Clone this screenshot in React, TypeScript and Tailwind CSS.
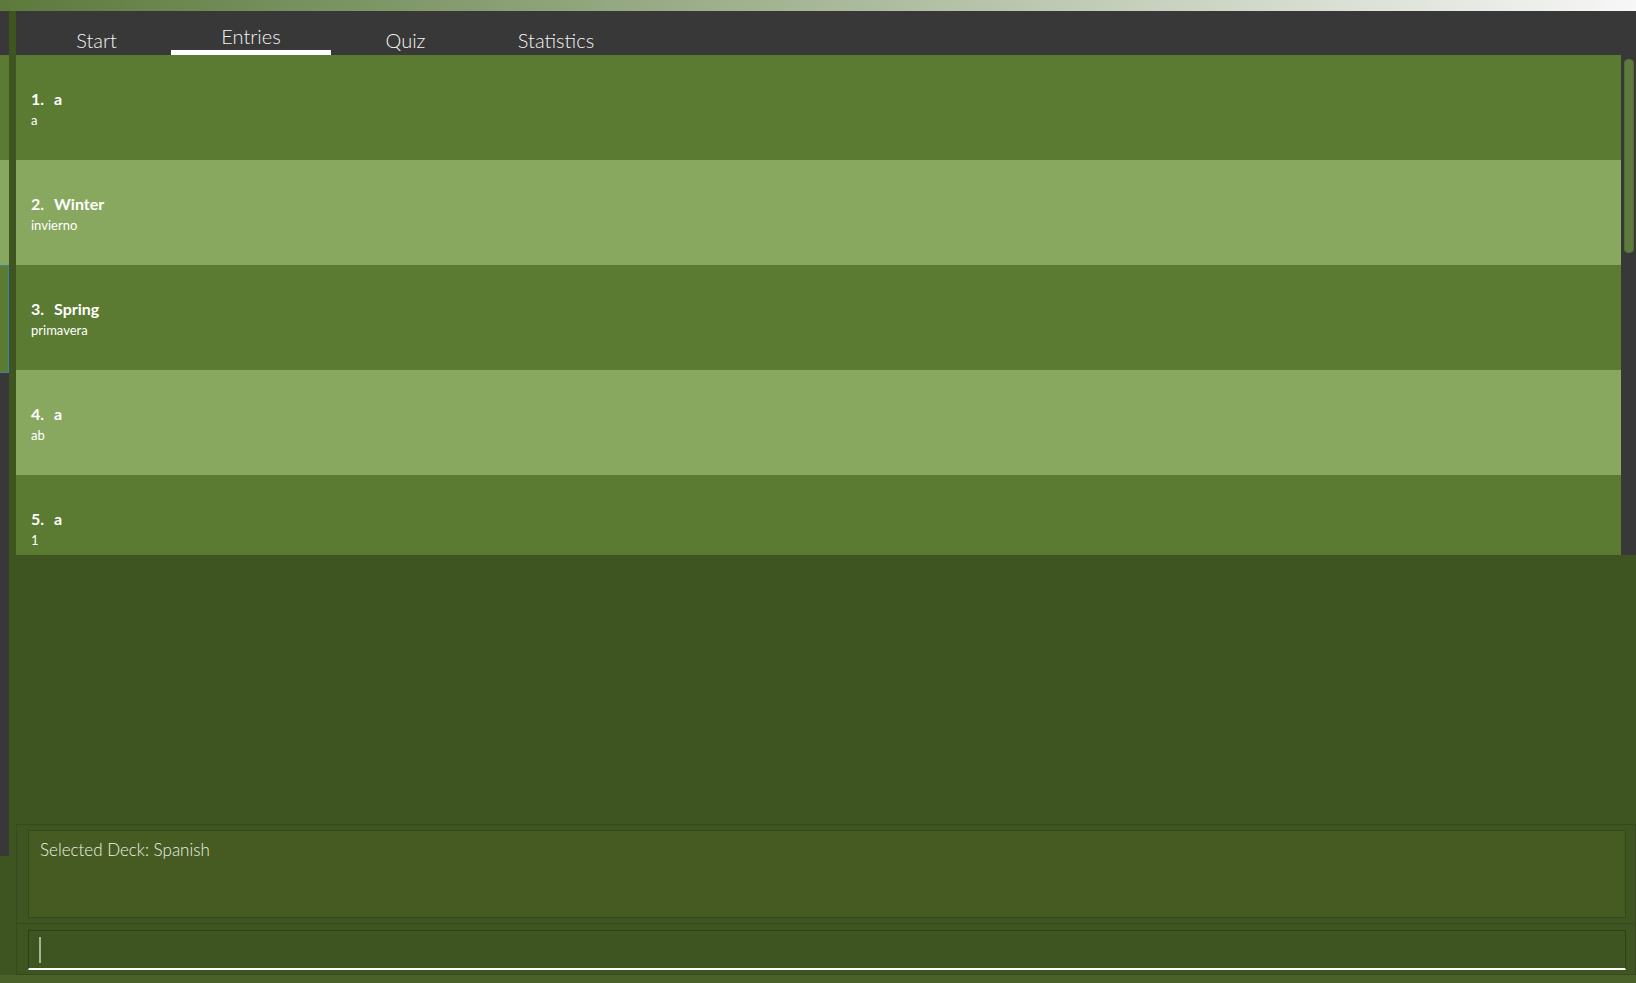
import { useState } from "react";

type Entry = { word: string; meaning: string };

const entries: Entry[] = [
  { word: "a", meaning: "a" },
  { word: "Winter", meaning: "invierno" },
  { word: "Spring", meaning: "primavera" },
  { word: "a", meaning: "ab" },
  { word: "a", meaning: "1" },
];

const tabs = [
  { label: "Start", width: "w-[155px] pl-[6px]" },
  { label: "Entries", width: "w-[160px]" },
  { label: "Quiz", width: "w-[149px]" },
  { label: "Statistics", width: "w-[152px]" },
];

function EntryRow({ index, entry }: { index: number; entry: Entry }) {
  const light = index % 2 === 1;
  return (
    <div className={`h-[105px] shrink-0 pl-[15px] pt-[34px] text-white ${light ? "bg-[#88a85f]" : "bg-[#5b7a32]"}`}>
      <div className="flex gap-[10px] text-[16px] font-bold leading-[20px]">
        <span>{index + 1}.</span>
        <span>{entry.word}</span>
      </div>
      <div className="mt-[3px] text-[13px] leading-[16px]">{entry.meaning}</div>
    </div>
  );
}

export default function App() {
  const [active, setActive] = useState("Entries");

  return (
    <div className="flex h-[983px] w-[1636px] flex-col overflow-hidden bg-[#3e5421] font-['Lato',sans-serif]">
      <div className="h-[11px] shrink-0 bg-gradient-to-r from-[#5d7a3c] to-[#f7f7f7]" />

      <div className="flex min-h-0 flex-1">
        {/* panel peeking out on the left */}
        <div className="flex w-[9px] shrink-0 flex-col">
          <div className="h-[44px] shrink-0 bg-[#383838]" />
          <div className="h-[105px] shrink-0 bg-[#5b7a32]" />
          <div className="h-[105px] shrink-0 bg-[#88a85f]" />
          <div className="h-[108px] shrink-0 border-y border-r border-[#3f82a8] bg-[#5b7a32]" />
          <div className="h-[483px] shrink-0 bg-[#383838]" />
        </div>

        <div className="ml-[7px] flex min-w-0 flex-1 flex-col">
          <div className="flex h-[44px] shrink-0 bg-[#383838]">
            {tabs.map((t) => {
              const selected = t.label === active;
              return (
                <button
                  key={t.label}
                  onClick={() => setActive(t.label)}
                  className={`flex h-full flex-col items-center ${t.width} ${selected ? "pt-[13px]" : "pt-[17px]"}`}
                >
                  <span className="text-[20px] font-light leading-[24px] text-[#f4f4f4]">{t.label}</span>
                  {selected && <span className="mt-auto h-[5px] w-full bg-white" />}
                </button>
              );
            })}
          </div>

          <div className="flex h-[500px] shrink-0">
            <div className="flex min-w-0 flex-1 flex-col overflow-hidden">
              {entries.map((e, i) => (
                <EntryRow key={i} index={i} entry={e} />
              ))}
            </div>
            <div className="w-[15px] shrink-0 bg-[#383838] pl-[3px] pt-[4px]">
              <div className="h-[194px] w-[10px] rounded-[4px] border border-[#526d33] bg-[#5e7a3d]" />
            </div>
          </div>

          <div className="flex-1" />

          <div className="h-[100px] shrink-0 border border-[#36491c] pb-[5px] pl-[11px] pr-[9px] pt-[5px]">
            <div className="h-[88px] border border-[#34491b] bg-[#455b22] pl-[11px] pt-[9px] text-[17px] font-light leading-[20px] text-[#eef2e6]">
              Selected Deck: Spanish
            </div>
          </div>

          <div className="h-[51px] shrink-0 border border-t-0 border-[#36491c] pb-[4px] pl-[11px] pr-[9px] pt-[6px]">
            <div className="flex h-[40px] items-center border border-b-2 border-[#2c3f17] border-b-white bg-[#3e5421] pl-[10px]">
              <span className="h-[26px] w-[2px] bg-[#a7b394]" />
            </div>
          </div>
        </div>
      </div>

      <div className="h-[8px] shrink-0 bg-[#4a6229]" />
    </div>
  );
}
